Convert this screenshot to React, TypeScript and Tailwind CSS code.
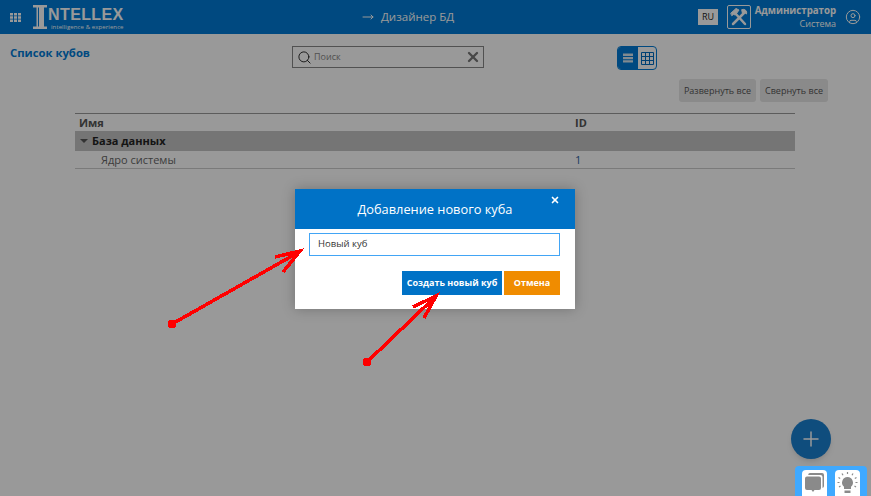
import { MoveRight, Search, X, Plus, CircleUser } from 'lucide-react';

function Logo() {
  return (
    <div className="ml-[10px] flex h-[26px] w-[92px] items-start">
      <svg width="16" height="26" viewBox="0 0 16 26" className="shrink-0">
        <path d="M1 1H15V3.500H12V22.500H15V25H1V22.500H4.500V3.500H1Z" fill="#ffffff" />
        <path d="M6 3.500H7V22.500H6Z" fill="#007bd5" />
      </svg>
      <div className="flex flex-col">
        <span className="mt-[3px] text-[16px] leading-[15px] font-bold tracking-[0.4px] text-white font-['Liberation_Sans',sans-serif]">NTELLEX</span>
        <span className="mt-[2px] ml-[3px] text-[6px] leading-[6px] tracking-[0.1px] whitespace-nowrap text-white">intelligence &amp; experience</span>
      </div>
    </div>
  );
}

function TopBar() {
  return (
    <header className="flex h-[34px] items-center bg-[#007bd5] pl-[10px] text-white">
      <svg width="12" height="9" viewBox="0 0 12 9" fill="#ffffff" className="shrink-0">
        <path d="M0 0H3V2.500H0ZM4 0H7V2.500H4ZM8 0H11V2.500H8ZM0 3.300H3V5.700H0ZM4 3.300H7V5.700H4ZM8 3.300H11V5.700H8ZM0 6.500H3V9H0ZM4 6.500H7V9H4ZM8 6.500H11V9H8Z" />
      </svg>
      <Logo />
      <div className="ml-[238px] flex items-center gap-[7px] text-[11.500px]">
        <MoveRight className="h-[12px] w-[12px]" />
        <span>Дизайнер БД</span>
      </div>
      <div className="ml-[244px] flex h-[16px] w-[20px] items-center justify-center bg-white text-[9px] text-[#222]">RU</div>
      <div className="ml-[9px] flex h-[24px] w-[24px] items-center justify-center rounded-[2px] border border-white">
        <svg width="20" height="20" viewBox="0 0 20 20" fill="none" stroke="#ffffff" strokeLinecap="round">
          <path d="M4 17L15 6" strokeWidth="2.500" />
          <path d="M13 2.500a3.500 3.500 0 0 1 4.500 4.500l-2-1.500-2 1-.5-2Z" fill="#ffffff" strokeWidth="1" />
          <path d="M16 17L6 6" strokeWidth="2.500" />
          <path d="M2 6L7 1.500L10 3L6.500 8L4.500 7.500L3 8.500Z" fill="#ffffff" strokeWidth="1" />
        </svg>
      </div>
      <div className="ml-[4px] flex w-[81px] flex-col items-end text-right">
        <span className="text-[9.700px] leading-[13px] font-bold whitespace-nowrap">Администратор</span>
        <span className="text-[9px] leading-[13px]">Система</span>
      </div>
      <CircleUser className="ml-[9px] h-[16px] w-[16px]" strokeWidth={1.5} />
    </header>
  );
}

function Toolbar() {
  return (
    <div className="flex h-[45px] items-start pt-[12px] pl-[10px]">
      <h1 className="w-[282px] text-[11.300px] leading-[13px] font-bold text-[#007bd5]">Список кубов</h1>
      <div className="flex h-[22px] w-[192px] items-center border border-[#888] pr-[2px] pl-[4px]">
        <Search className="h-[15px] w-[15px] text-[#222]" strokeWidth={1.5} />
        <span className="ml-[2px] flex-1 text-[9px] text-[#888]">Поиск</span>
        <X className="h-[16px] w-[16px] text-[#777]" strokeWidth={3.500} />
      </div>
      <div className="ml-[133px] flex h-[24px] w-[40px] overflow-hidden rounded-[4px] border border-[#007bd5]">
        <div className="flex w-[20px] items-center justify-center bg-[#007bd5]">
          <svg width="12" height="12" viewBox="0 0 12 12" fill="#d8e6f0">
            <path d="M1 1.500H11V4H1ZM1 5H11V7.200H1ZM1 8.200H11V10.500H1Z" />
          </svg>
        </div>
        <div className="flex flex-1 items-center justify-center">
          <svg width="13" height="13" viewBox="0 0 13 13" fill="none" stroke="#006cc0" strokeWidth="1">
            <path d="M.5.5H12.500V12.500H.5ZM.5 4.500H12.500M.5 8.500H12.500M4.500.5V12.500M8.500.5V12.500" />
          </svg>
        </div>
      </div>
    </div>
  );
}

function ExpandButtons() {
  return (
    <div className="flex h-[23px] justify-end gap-[4px] pr-[43px] text-[9px] text-[#555]">
      <button className="h-[23px] w-[77px] rounded-[3px] bg-[#e6e6e6]">Развернуть все</button>
      <button className="h-[23px] w-[68px] rounded-[3px] bg-[#e6e6e6]">Свернуть все</button>
    </div>
  );
}

function CubeTable() {
  return (
    <div className="mt-[11px] ml-[75px] w-[720px] border-t border-[#999]">
      <div className="flex h-[17px] items-center pt-[1px] pl-[4px] text-[11px] font-bold text-[#555]">
        <span className="w-[496px]">Имя</span>
        <span>ID</span>
      </div>
      <div className="flex h-[20px] items-center bg-[#c3c3c3] pl-[5px] text-[11px] font-bold text-[#222]">
        <span className="mr-[4px] h-0 w-0 border-x-[4px] border-t-[4px] border-x-transparent border-t-[#555]" />
        <span>База данных</span>
      </div>
      <div className="flex h-[18px] items-center border-b border-[#ccc] pt-[1px] pl-[26px] text-[11px] text-[#666]">
        <span className="w-[474px]">Ядро системы</span>
        <span className="text-[#2c5f9e]">1</span>
      </div>
    </div>
  );
}

function Arrows() {
  return (
    <svg className="pointer-events-none absolute inset-0" width="871" height="496" fill="none" stroke="#ff0000" strokeWidth="3.500" shapeRendering="crispEdges">
      <circle cx="172" cy="324" r="4.500" fill="#ff0000" stroke="none" />
      <path d="M172 324L299 252" />
      <path d="M275 257L300 251L283 272" />
      <circle cx="367" cy="362" r="4.500" fill="#ff0000" stroke="none" />
      <path d="M367 362L435 297" />
      <path d="M413 307L436 296L424 318" />
    </svg>
  );
}

function CubeDialog() {
  return (
    <div className="absolute top-[189px] left-[295px] h-[120px] w-[280px] bg-white shadow-[0_0_12px_rgba(0,0,0,0.25)]">
      <div className="relative flex h-[40px] items-center justify-center bg-[#0072c6] pt-[2px] text-[12.800px] text-white">
        Добавление нового куба
        <X className="absolute top-[6px] right-[15px] h-[10px] w-[10px]" strokeWidth={4} />
      </div>
      <div className="mt-[4px] ml-[14px] flex h-[23px] w-[251px] items-center border border-[#42a5f5] pl-[8px] text-[9.500px] text-[#333]">
        Новый куб
      </div>
      <div className="mt-[15px] mr-[15px] flex justify-end gap-[2px] text-[9px] font-bold text-white">
        <button className="h-[24px] w-[100px] bg-[#0072c6]">Создать новый куб</button>
        <button className="h-[24px] w-[56px] bg-[#f08c00]">Отмена</button>
      </div>
    </div>
  );
}

function HelpDock() {
  return (
    <div className="absolute right-[4px] bottom-0 flex h-[30px] w-[72px] items-end justify-center gap-[8px] rounded-t-[4px] bg-[#3fa9ff]">
      <div className="flex h-[26px] w-[25px] items-start justify-center rounded-t-[4px] bg-white pt-[2px]">
        <svg width="21" height="22" viewBox="0 0 21 22" fill="#8a8a8a">
          <path d="M6 1H18a2 2 0 0 1 2 2V14a2 2 0 0 1-1.500 1.900V5a2 2 0 0 0-2-2H4.200A2 2 0 0 1 6 1Z" />
          <path d="M3 4.500H15a2 2 0 0 1 2 2V16a2 2 0 0 1-2 2H10.500L9 20L7.500 18H3a2 2 0 0 1-2-2V6.500a2 2 0 0 1 2-2Z" />
        </svg>
      </div>
      <div className="flex h-[26px] w-[25px] items-start justify-center rounded-t-[4px] bg-white pt-[1px]">
        <svg width="23" height="24" viewBox="0 0 23 24" fill="#8a8a8a" stroke="#8a8a8a">
          <path d="M11.500 6a5.500 5.500 0 0 1 3.500 9.700V18H8V15.700A5.500 5.500 0 0 1 11.500 6Z" stroke="none" />
          <path d="M8.500 19.500H14.500V22H8.500Z" stroke="none" />
          <path d="M11.500 1V3M6 2.500L7 4.200M17 2.500L16 4.200M2.500 6.500L4.200 7.500M20.500 6.500L18.800 7.500M1.500 11.500H3.500M19.500 11.500H21.500M3 16L4.500 15M20 16L18.500 15" strokeWidth="1.200" fill="none" />
        </svg>
      </div>
    </div>
  );
}

export default function App() {
  return (
    <div className="relative h-[496px] w-[871px] overflow-hidden bg-white font-['Open_Sans',sans-serif]">
      <TopBar />
      <Toolbar />
      <ExpandButtons />
      <CubeTable />
      <div className="absolute top-[419px] left-[791px] flex h-[40px] w-[40px] items-center justify-center rounded-full bg-[#1a80d0] shadow-md">
        <Plus className="h-[24px] w-[24px] text-white" strokeWidth={1.5} />
      </div>
      <div className="absolute inset-0 bg-black/40" />
      <CubeDialog />
      <HelpDock />
      <Arrows />
    </div>
  );
}
